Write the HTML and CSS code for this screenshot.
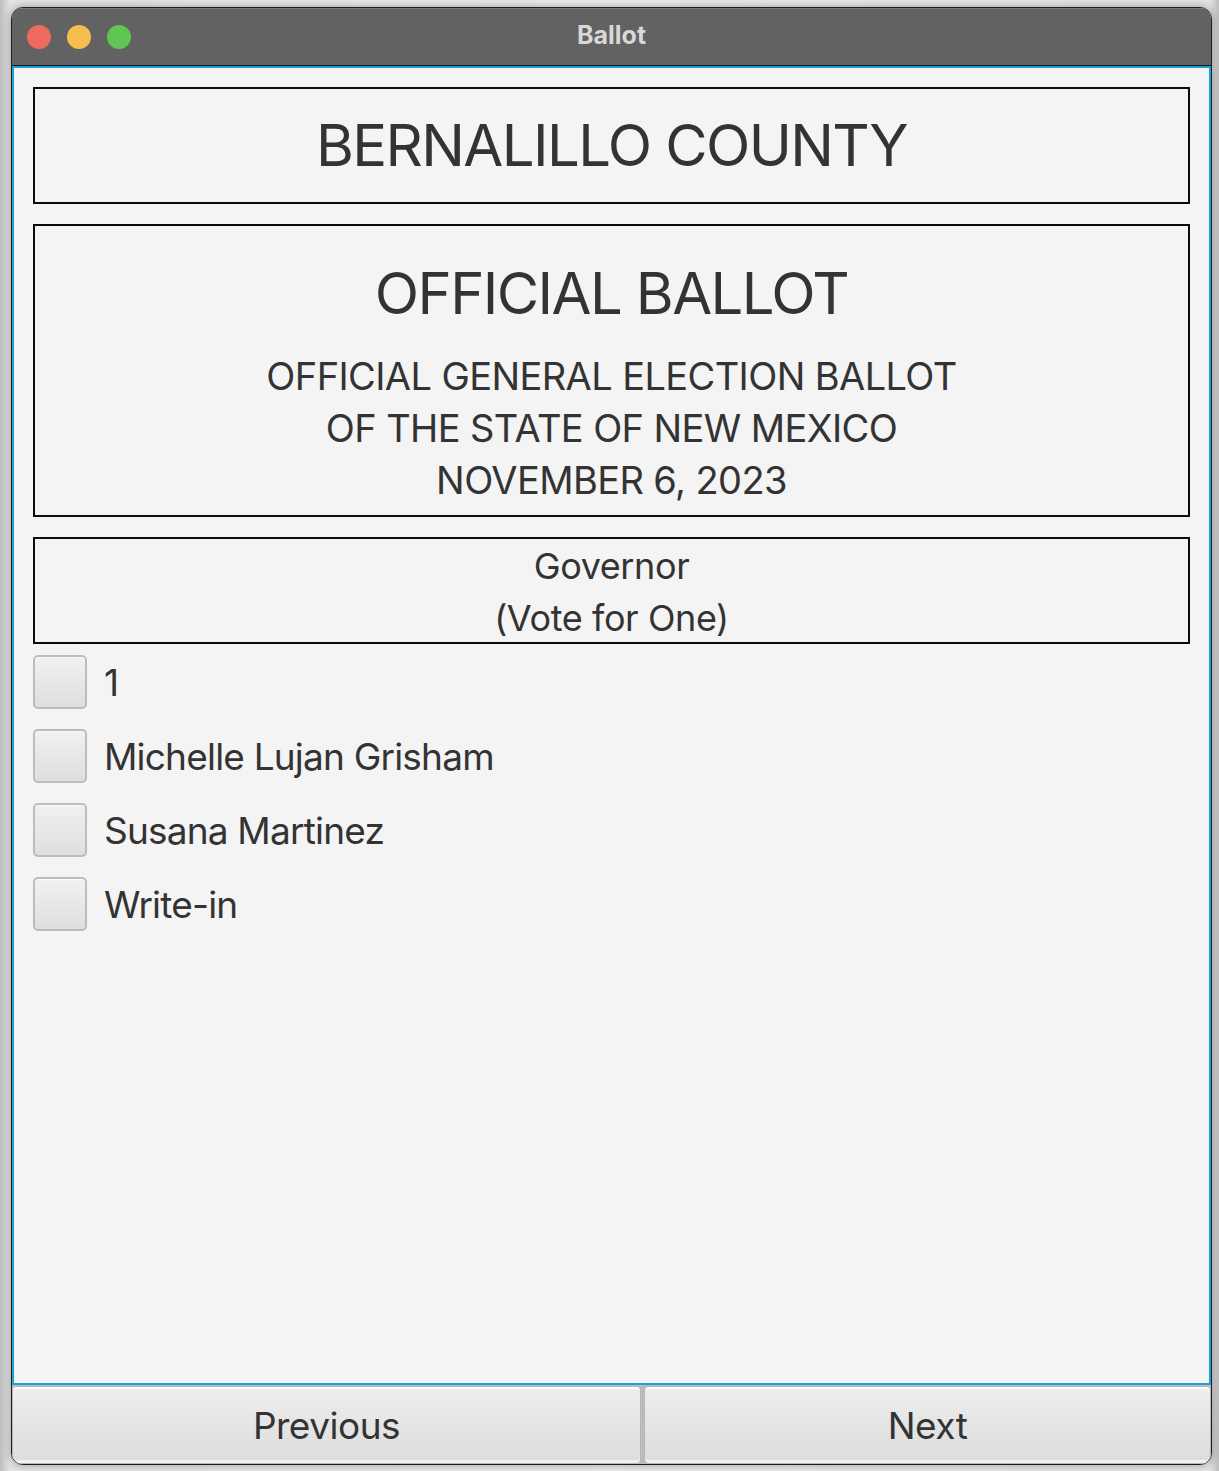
FILE: index.html
```html
<!DOCTYPE html>
<html>
<head>
<meta charset="utf-8">
<link rel="stylesheet" href="styles.css">
</head>
<body>
<div class="window">
  <div class="titlebar">
    <div class="lights">
      <span class="light red"></span>
      <span class="light yellow"></span>
      <span class="light green"></span>
    </div>
    <div class="title">Ballot</div>
  </div>
  <div class="main">
    <div class="box county">BERNALILLO COUNTY</div>
    <div class="box official">
      <div class="official-title">OFFICIAL BALLOT</div>
      <div class="official-sub">OFFICIAL GENERAL ELECTION BALLOT<br>OF THE STATE OF NEW MEXICO<br>NOVEMBER 6, 2023</div>
    </div>
    <div class="box race">Governor<br>(Vote for One)</div>
    <div class="choices">
      <label class="choice"><span class="check"></span><span class="choice-label">1</span></label>
      <label class="choice"><span class="check"></span><span class="choice-label">Michelle Lujan Grisham</span></label>
      <label class="choice"><span class="check"></span><span class="choice-label">Susana Martinez</span></label>
      <label class="choice"><span class="check"></span><span class="choice-label">Write-in</span></label>
    </div>
  </div>
  <div class="buttons">
    <div class="btn prev">Previous</div>
    <div class="btn next">Next</div>
  </div>
</div>
</body>
</html>
```
FILE: styles.css
```css
html, body {
  margin: 0;
  padding: 0;
}
body {
  width: 1219px;
  height: 1471px;
  background: linear-gradient(90deg, #bdbdbd 0px, #e4e4e4 10px, #ececec 50%, #e4e4e4 calc(100% - 10px), #bdbdbd 100%);
  font-family: Inter, "Noto Sans", sans-serif;
  color: #333;
  overflow: hidden;
}
.window {
  margin: 7px 0 0 11px;
  width: 1201px;
  height: 1458px;
  box-sizing: border-box;
  border: 1px solid #1e1e1e;
  border-radius: 12px;
  overflow: hidden;
  display: flex;
  flex-direction: column;
  background: #f4f4f4;
  box-shadow: 0 0 8px rgba(0,0,0,0.35);
}
.titlebar {
  height: 56px;
  flex: none;
  background: #626262;
  border-top: 1px solid #7d7d7d;
  border-bottom: 1px solid #141414;
  display: flex;
  align-items: center;
  position: relative;
}
.lights {
  display: flex;
  gap: 16px;
  padding-left: 15px;
}
.light {
  width: 24px;
  height: 24px;
  border-radius: 50%;
  display: block;
}
.red { background: #ed6a5e; }
.yellow { background: #f5bf4f; }
.green { background: #61c554; }
.title {
  position: absolute;
  left: 0;
  right: 0;
  text-align: center;
  font-weight: 700;
  font-size: 25px;
  color: #d8d8d8;
  top: 11px;
}
.main {
  flex: 1;
  border: 2px solid #1ba0d7;
  padding: 19px 19px 0 19px;
  display: flex;
  flex-direction: column;
  gap: 20px;
  background: #f4f4f4;
}
.box {
  border: 2px solid #0c0c0c;
  text-align: center;
}
.county {
  height: 113px;
  box-sizing: content-box;
  font-size: 58px;
  line-height: 113px;
  letter-spacing: -1.6px;
}
.official {
  padding-top: 32px;
  box-sizing: border-box;
  height: 293px;
}
.official-title {
  font-size: 58px;
  line-height: 70px;
  letter-spacing: -1.6px;
}
.official-sub {
  margin-top: 22px;
  font-size: 38px;
  line-height: 52px;
  letter-spacing: -0.6px;
}
.race {
  height: 107px;
  box-sizing: border-box;
  font-size: 36px;
  line-height: 52px;
  padding-top: 1px;
  letter-spacing: -0.4px;
}
.choices {
  display: flex;
  flex-direction: column;
  gap: 20px;
  margin-top: -9px;
}
.choice {
  display: flex;
  align-items: center;
  height: 54px;
}
.check {
  width: 54px;
  height: 54px;
  box-sizing: border-box;
  border: 2px solid #bcbcbc;
  border-radius: 5px;
  background: linear-gradient(#f1f1f1, #dedede);
  box-shadow: inset 0 1px 0 #fafafa;
  flex: none;
}
.choice-label {
  margin-left: 17px;
  font-size: 37px;
  letter-spacing: -0.8px;
}
.buttons {
  height: 78px;
  flex: none;
  display: flex;
  gap: 3px;
  background: #bcbcbc;
  padding-top: 1px;
}
.btn {
  background: linear-gradient(#eeeeee, #dcdcdc);
  border: 1px solid #b6b6b6;
  box-shadow: inset 0 2px 0 #ffffff, inset 0 -3px 0 #f0f0f0;
  border-radius: 4px;
  display: flex;
  align-items: center;
  justify-content: center;
  font-size: 37px;
  letter-spacing: -0.5px;
  color: #333;
}
.prev { width: 627px; flex: none; }
.next { flex: 1; }
```
